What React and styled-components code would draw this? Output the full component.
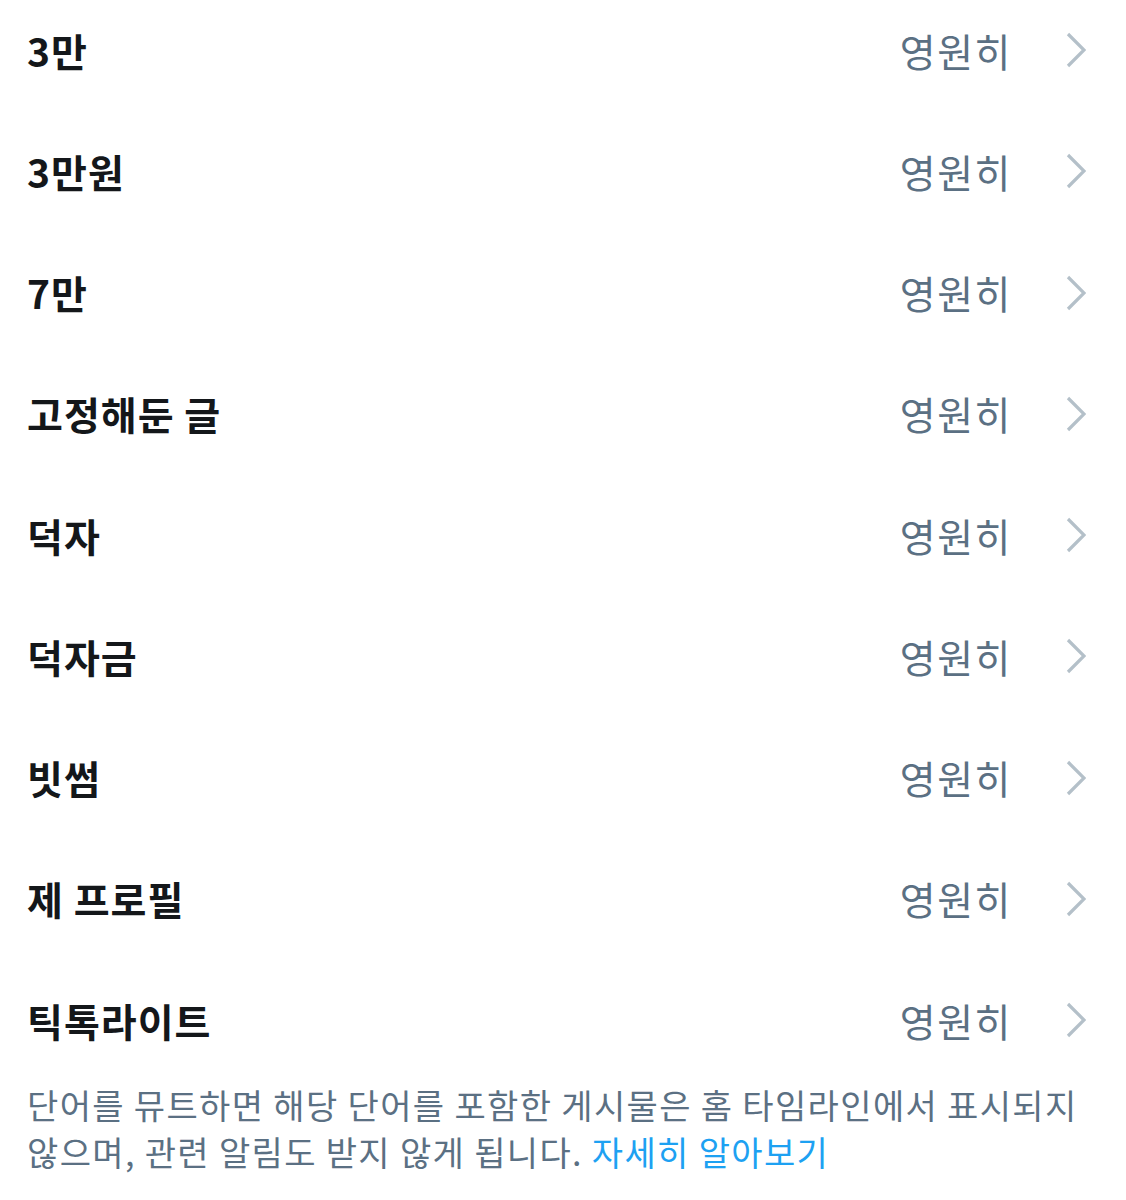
import styled, { createGlobalStyle } from 'styled-components';

const GlobalStyle = createGlobalStyle`
    html, body {
        margin: 0;
        padding: 0;
        background: #ffffff;
    }
    body {
        font-family: "Noto Sans CJK KR", "Noto Sans", sans-serif;
        overflow: hidden;
    }
`;

const Page = styled.div`
    width: 1126px;
    height: 1200px;
    overflow: hidden;
    background: #ffffff;
`;

const List = styled.ul`
    list-style: none;
    margin: -10.6px 0 0 0;
    padding: 0;
`;

const Row = styled.li`
    display: flex;
    align-items: center;
    height: 121.25px;
    padding: 0 40px 0 27px;
    box-sizing: border-box;
`;

const Word = styled.span`
    flex: 1;
    font-size: 39px;
    font-weight: 700;
    letter-spacing: 1px;
    color: #14171a;
    line-height: 1;
`;

const Duration = styled.span`
    font-size: 39px;
    font-weight: 400;
    letter-spacing: 1.5px;
    color: #5b7083;
    line-height: 1;
    margin-right: 54px;
`;

const Chevron = styled.svg`
    width: 20px;
    height: 36px;
    flex-shrink: 0;
`;

const Note = styled.p`
    margin: 0;
    padding: 0 40px 0 27px;
    font-size: 34px;
    letter-spacing: 1.35px;
    line-height: 47px;
    color: #5b7083;
    word-break: keep-all;
`;

const Link = styled.a`
    color: #1da1f2;
    text-decoration: none;
`;

const words = ['3만', '3만원', '7만', '고정해둔 글', '덕자', '덕자금', '빗썸', '제 프로필', '틱톡라이트'];

function ChevronIcon() {
    return (
        <Chevron viewBox="0 0 20 36" fill="none">
            <path d="M2 2 L18 18 L2 34" stroke="#b4c0c9" strokeWidth="3.2" />
        </Chevron>
    );
}

export default function App() {
    return (
        <Page>
            <GlobalStyle />
            <List>
                {words.map((w) => (
                    <Row key={w}>
                        <Word>{w}</Word>
                        <Duration>영원히</Duration>
                        <ChevronIcon />
                    </Row>
                ))}
            </List>
            <Note>
                단어를 뮤트하면 해당 단어를 포함한 게시물은 홈 타임라인에서 표시되지 않으며, 관련 알림도 받지 않게 됩니다.{' '}
                <Link href="#">자세히 알아보기</Link>
            </Note>
        </Page>
    );
}
